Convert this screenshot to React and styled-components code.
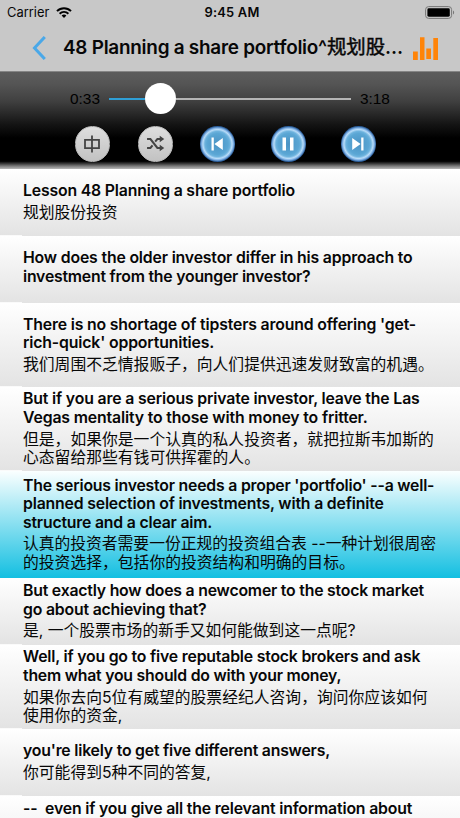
import styled, { createGlobalStyle, css } from "styled-components";

const colors = {
  bar: "#c8c8c8",
  text: "#070707",
  blue: "#2f9fd6",
  chevron: "#4aa8e8",
  orange: "#ff8408",
};

const GlobalStyle = createGlobalStyle`
  * {
    box-sizing: border-box;
  }

  body {
    margin: 0;
    overflow: hidden;
    font-family: Inter, "Noto Sans CJK SC", sans-serif;
    color: ${colors.text};
  }
`;

const Screen = styled.div`
  width: 460px;
  height: 818px;
  overflow: hidden;
  background: #fff;
`;

const StatusBar = styled.div`
  display: grid;
  grid-template-columns: 1fr auto 1fr;
  align-items: center;
  height: 24px;
  padding: 0 5px 0 7px;
  background: ${colors.bar};
  font-size: 12.9px;

  .carrier {
    display: flex;
    align-items: center;
    gap: 7px;
  }

  .time {
    padding-left: 2px;
    font-weight: 600;
    letter-spacing: 0.2px;
  }

  .battery {
    justify-self: end;
    display: block;
  }
`;

const NavBar = styled.div`
  display: flex;
  align-items: center;
  height: 47px;
  padding: 0 21px 0 32px;
  background: ${colors.bar};

  svg {
    flex: none;
    display: block;
  }
`;

const NavTitle = styled.h1`
  flex: 1;
  min-width: 0;
  margin: 0 0 0 17px;
  font-size: 18.9px;
  font-weight: 600;
  line-height: 24px;
  white-space: nowrap;
  letter-spacing: -0.24px;

  span {
    font-size: 19.4px;
    font-weight: 400;
    letter-spacing: 0;
    -webkit-text-stroke: 0.45px ${colors.text};
  }
`;

const Player = styled.div`
  height: 98px;
  border-top: 1px solid #858585;
  background: linear-gradient(
    #5c5c5c,
    #555 12%,
    #404040 30%,
    #141414 54%,
    #000 68%,
    #000 92%,
    #3a3a3a 94.5%,
    #7a7a7a 97%,
    #b8b8b8 100%
  );
`;

const Progress = styled.div`
  display: flex;
  align-items: center;
  height: 54px;
  padding-left: 70px;
  font-family: "Liberation Sans", Arial, sans-serif;
  font-size: 15.4px;
  color: #000;
`;

const Track = styled.div`
  display: flex;
  align-items: center;
  width: 242px;
  margin: 0 9px;

  .played {
    width: 36px;
    height: 2px;
    background: ${colors.blue};
  }

  .thumb {
    width: 31px;
    height: 31px;
    margin-bottom: 2px;
    border-radius: 50%;
    background: #fff;
  }

  .rest {
    flex: 1;
    height: 2px;
    background: #b4b4b4;
  }
`;

const Controls = styled.div`
  display: flex;
  height: 36px;
  padding-left: 74.5px;
`;

const RoundButton = styled.button`
  display: flex;
  align-items: center;
  justify-content: center;
  width: 35.5px;
  height: 35.5px;
  margin: 0 ${({ $gap = 0 }) => $gap}px 0 0;
  padding: 0;
  border: 1px solid #bdbdbd;
  border-radius: 50%;
  background: linear-gradient(#dedede, #c2c2c2);

  svg {
    flex: none;
    display: block;
  }

  ${({ $blue }) =>
    $blue &&
    css`
      border: 0;
      background: radial-gradient(
        circle closest-side,
        #4b93c4 0,
        #5aa6d4 60%,
        #6cb2dd 72%,
        #b9dcf8 83%,
        #7fb0e4 91%,
        #2c5f9c 100%
      );
    `}
`;

const Row = styled.div`
  display: flex;
  flex-direction: column;
  justify-content: ${({ $top }) => ($top ? "flex-start" : "center")};
  height: ${({ $height }) => $height}px;
  padding: ${({ $top }) => ($top ? 4 : 0)}px 0 ${({ $bottom = 0 }) => $bottom}px
    23px;
  background: ${({ $active }) =>
    $active
      ? "linear-gradient(#fbffff, #13bfe1)"
      : `linear-gradient(#fafafa, #fafafa) left bottom / 22px 1px no-repeat,
         linear-gradient(#fff, #e3e3e3)`};
`;

const English = styled.div`
  font-size: 15.8px;
  font-weight: 600;
  line-height: 18.6px;
  white-space: pre;
  letter-spacing: ${({ $spacing = 0 }) => $spacing}px;
`;

const Chinese = styled.div`
  margin-top: ${({ $first }) => ($first ? 3 : 0)}px;
  font-size: 15.8px;
  line-height: 18.6px;
  white-space: pre;
  letter-spacing: ${({ $spacing = 0 }) => $spacing}px;
`;

// every line is [text, letter spacing]
const rows = [
  {
    height: 67,
    en: [["Lesson 48 Planning a share portfolio", -0.17]],
    cn: [["规划股份投资", -0.05]],
  },
  {
    height: 67,
    bottom: 3,
    en: [
      ["How does the older investor differ in his approach to", -0.16],
      ["investment from the younger investor?", -0.21],
    ],
    cn: [],
  },
  {
    height: 84,
    en: [
      ["There is no shortage of tipsters around offering 'get-", -0.16],
      ["rich-quick' opportunities.", -0.15],
    ],
    cn: [["我们周围不乏情报贩子，向人们提供迅速发财致富的机遇。", 0]],
  },
  {
    height: 84,
    en: [
      ["But if you are a serious private investor, leave the Las", -0.15],
      ["Vegas mentality to those with money to fritter.", -0.14],
    ],
    cn: [
      ["但是，如果你是一个认真的私人投资者，就把拉斯韦加斯的", 0],
      ["心态留给那些有钱可供挥霍的人。", 0],
    ],
  },
  {
    height: 107,
    active: true,
    en: [
      ["The serious investor needs a proper 'portfolio' --a well-", -0.2],
      ["planned selection of investments, with a definite", -0.17],
      ["structure and a clear aim.", -0.19],
    ],
    cn: [
      ["认真的投资者需要一份正规的投资组合表 --一种计划很周密", -0.03],
      ["的投资选择，包括你的投资结构和明确的目标。", 0],
    ],
  },
  {
    height: 67,
    en: [
      ["But exactly how does a newcomer to the stock market", -0.2],
      ["go about achieving that?", -0.18],
    ],
    cn: [["是, 一个股票市场的新手又如何能做到这一点呢?", -0.02]],
  },
  {
    height: 84,
    en: [
      ["Well, if you go to five reputable stock brokers and ask", -0.19],
      ["them what you should do with your money,", -0.22],
    ],
    cn: [
      ["如果你去向5位有威望的股票经纪人咨询，询问你应该如何", 0],
      ["使用你的资金,", 0],
    ],
  },
  {
    height: 67,
    en: [["you're likely to get five different answers,", -0.2]],
    cn: [["你可能得到5种不同的答复,", 0]],
  },
  {
    height: 84,
    top: true,
    en: [["--  even if you give all the relevant information about", -0.16]],
    cn: [],
  },
];

const WifiIcon = () => (
  <svg width="16" height="11" viewBox="0 0 16 11" fill="none" stroke="#000">
    <path d="M1 4.1a10 10 0 0 1 14 0" strokeWidth="2" />
    <path d="M3.6 6.7a6.3 6.3 0 0 1 8.8 0" strokeWidth="1.9" />
    <path d="M8 11 5.6 8.6a3.5 3.5 0 0 1 4.8 0z" fill="#000" stroke="none" />
  </svg>
);

const BatteryIcon = () => (
  <svg className="battery" width="30" height="13" viewBox="0 0 30 13">
    <rect x=".6" y=".6" width="26" height="11.8" rx="3" fill="none" stroke="#777" />
    <rect x="2.4" y="2.3" width="22.4" height="8.4" rx="1.4" fill="#000" />
    <path d="M28 4.5c1.5.5 1.5 3.5 0 4z" fill="#777" />
  </svg>
);

const BackIcon = () => (
  <svg width="14" height="24" viewBox="0 0 14 24">
    <path d="M12.8 1 2.5 12l10.3 11" fill="none" stroke={colors.chevron} strokeWidth="3" />
  </svg>
);

const BarsIcon = () => (
  <svg width="26" height="24" viewBox="0 0 26 24" fill={colors.orange}>
    <path d="M0 15.5h4.8V24H0zM7 1.3h4.5V24H7zM13.3 12.5H18V23h-4.7zM20.3 2H25v22h-4.7z" />
  </svg>
);

const ZhongIcon = () => (
  <svg width="18" height="18" viewBox="0 0 18 18" fill="none" stroke="#444" strokeWidth="1.8">
    <path d="M2 4.8h14v8.4H2zM9 .5v17" />
  </svg>
);

const ShuffleIcon = () => (
  <svg width="19" height="17" viewBox="0 0 18 16">
    <path
      d="M1 3.8h3.2l6.6 8.4H14M1 12.2h3.2l2-2.4M8.7 6.2l2.1-2.4H14"
      fill="none"
      stroke="#444"
      strokeWidth="1.9"
    />
    <path d="M13 .7 17.3 3.8 13 6.9zM13 9.1l4.3 3.1-4.3 3.1z" fill="#444" />
  </svg>
);

const PrevIcon = () => (
  <svg width="14" height="14" viewBox="0 0 14 14" fill="#fff">
    <path d="M1.5 .5h2.3v13H1.5zM12.8 1v12L4.4 7z" />
  </svg>
);

const PauseIcon = () => (
  <svg width="14" height="14" viewBox="0 0 14 14" fill="#fff">
    <path d="M1.5 .5H5v13H1.5zM9 .5h3.5v13H9z" />
  </svg>
);

const NextIcon = () => (
  <svg width="14" height="14" viewBox="0 0 14 14" fill="#fff">
    <path d="M10.2 .5h2.3v13h-2.3zM1.2 1v12L9.6 7z" />
  </svg>
);

const App = () => {
  return (
    <Screen>
      <GlobalStyle />

      <StatusBar>
        <div className="carrier">
          <span>Carrier</span>
          <WifiIcon />
        </div>
        <span className="time">9:45 AM</span>
        <BatteryIcon />
      </StatusBar>

      <NavBar>
        <BackIcon />
        <NavTitle>
          48 Planning a share portfolio^<span>规划股</span>…
        </NavTitle>
        <BarsIcon />
      </NavBar>

      <Player>
        <Progress>
          <span>0:33</span>
          <Track>
            <div className="played" />
            <div className="thumb" />
            <div className="rest" />
          </Track>
          <span>3:18</span>
        </Progress>

        <Controls>
          <RoundButton $gap={27.5}>
            <ZhongIcon />
          </RoundButton>
          <RoundButton $gap={26.5}>
            <ShuffleIcon />
          </RoundButton>
          <RoundButton $blue $gap={35.5}>
            <PrevIcon />
          </RoundButton>
          <RoundButton $blue $gap={34.5}>
            <PauseIcon />
          </RoundButton>
          <RoundButton $blue>
            <NextIcon />
          </RoundButton>
        </Controls>
      </Player>

      {rows.map(({ height, active, top, bottom, en, cn }) => (
        <Row
          key={en[0][0]}
          $height={height}
          $active={active}
          $top={top}
          $bottom={bottom}
        >
          {en.map(([text, spacing]) => (
            <English key={text} $spacing={spacing}>
              {text}
            </English>
          ))}
          {cn.map(([text, spacing], i) => (
            <Chinese key={text} $first={i === 0} $spacing={spacing}>
              {text}
            </Chinese>
          ))}
        </Row>
      ))}
    </Screen>
  );
};

export default App;
